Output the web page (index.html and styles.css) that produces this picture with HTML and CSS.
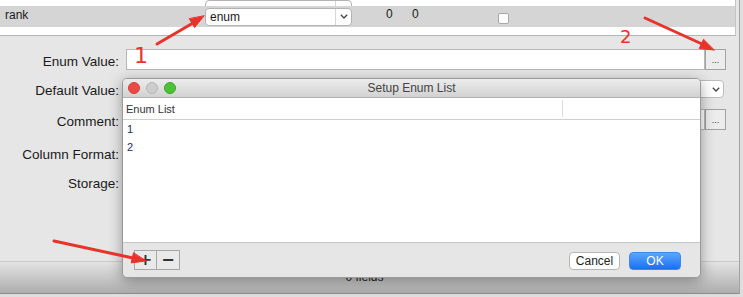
FILE: index.html
```html
<!DOCTYPE html>
<html lang="en">
<head>
    <meta charset="UTF-8">
    <meta name="viewport" content="width=device-width, initial-scale=1.0">
    <title>Setup Enum List</title>
    <link rel="stylesheet" href="styles.css">
</head>
<body>
    <div class="window">
        <div class="fields">
            <div class="frow frow-prev">
                <span></span>
                <span class="sel"><span class="sel-val"></span><span class="sel-arrow"></span></span>
                <span></span>
                <span></span>
                <span class="chk-cell"><span class="chk"></span></span>
            </div>
            <div class="frow frow-active">
                <span class="fname">rank</span>
                <span class="sel">
                    <span class="sel-val">enum</span>
                    <span class="sel-arrow"><svg width="8" height="5" viewBox="0 0 8 5"><path d="M0.8 0.8 L4 4 L7.2 0.8" fill="none" stroke="#444" stroke-width="1.3"/></svg></span>
                </span>
                <span class="num">0</span>
                <span class="num num-b">0</span>
                <span class="chk-cell"><span class="chk"></span></span>
            </div>
        </div>

        <div class="props">
            <div class="prop prop-enum">
                <label>Enum Value:</label>
                <div class="field"></div>
                <button class="more">...</button>
            </div>
            <div class="prop prop-default">
                <label>Default Value:</label>
                <div class="field field-select">
                    <span class="sel-arrow"><svg width="8" height="5" viewBox="0 0 8 5"><path d="M0.8 0.8 L4 4 L7.2 0.8" fill="none" stroke="#444" stroke-width="1.3"/></svg></span>
                </div>
            </div>
            <div class="prop prop-comment">
                <label>Comment:</label>
                <div class="field"></div>
                <button class="more">...</button>
            </div>
            <div class="prop prop-format">
                <label>Column Format:</label>
            </div>
            <div class="prop prop-storage">
                <label>Storage:</label>
            </div>
        </div>

        <div class="statusbar">0 fields</div>
    </div>

    <div class="dialog">
        <div class="titlebar">
            <span class="light light-red"></span>
            <span class="light light-gray"></span>
            <span class="light light-green"></span>
            <span class="title">Setup Enum List</span>
        </div>
        <div class="list">
            <div class="list-head">
                <span class="head-cell">Enum List</span>
                <span class="head-cell head-rest"></span>
            </div>
            <div class="list-row">1</div>
            <div class="list-row">2</div>
        </div>
        <div class="dialog-bar">
            <div class="addremove">
                <button class="ar-btn">+</button>
                <button class="ar-btn">&minus;</button>
            </div>
            <div class="actions">
                <button class="btn btn-cancel">Cancel</button>
                <button class="btn btn-ok">OK</button>
            </div>
        </div>
    </div>

    <svg class="marks" width="743" height="297" viewBox="0 0 743 297">
        <g stroke="#e8322b" stroke-width="3" stroke-linecap="round" fill="#e8322b">
            <line x1="157" y1="44" x2="193" y2="23"/>
            <polygon points="204,16 194.6,27.5 189.4,18.9" stroke-width="1"/>
            <line x1="645" y1="18" x2="702" y2="44"/>
            <polygon points="714,50 699.2,48.6 703.4,39.6" stroke-width="1"/>
            <line x1="54" y1="241" x2="133" y2="258"/>
            <polygon points="146,261 131.2,262.9 133.4,253.1" stroke-width="1"/>
        </g>
        <text class="mark-num" x="134" y="63" font-size="22">1</text>
        <text class="mark-num" x="620" y="43" font-size="18">2</text>
    </svg>
</body>
</html>
```

FILE: styles.css
```css
body {
    margin: 0;
    background-color: #dedede;
    font-family: "Liberation Sans", Arial, sans-serif;
    color: #1a1a1a;
    width: 743px;
    height: 297px;
    overflow: hidden;
    position: relative;
}
.window {
    width: 739px;
    height: 293px;
    border-right: 1px solid #a3a3a3;
    border-bottom: 1px solid #8c8c8c;
    background-color: #e6e6e6;
    display: flex;
    flex-direction: column;
}

/* field table */
.fields {
    height: 35px;
    margin-right: 3px;
    background: #fff;
    border-bottom: 1px solid #b4b4b4;
    border-right: 1px solid #c4c4c4;
}
.frow {
    display: grid;
    grid-template-columns: 205px 147px 48px 50px 98px 1fr;
    font-size: 12px;
}
.frow-prev {
    height: 3px;
    padding-bottom: 3px;
    overflow: hidden;
    align-items: end;
}
.frow-active {
    height: 21px;
    background: #d5d5d5;
    align-items: center;
}
.fname {
    padding-left: 5px;
    padding-bottom: 4px;
}
.sel {
    height: 18px;
    box-sizing: border-box;
    display: flex;
    background: #fff;
    border: 1px solid #b3b3b3;
    border-radius: 4px;
}
.sel-val {
    flex: 1;
    padding-left: 4px;
    line-height: 16px;
    font-size: 12px;
}
.sel-arrow {
    width: 15px;
    border-left: 1px solid #d6d6d6;
    display: flex;
    align-items: center;
    justify-content: center;
}
.num {
    padding-left: 34px;
    padding-bottom: 6px;
}
.num-b {
    padding-left: 12px;
}
.chk-cell {
    padding-left: 48px;
    display: flex;
}
.chk {
    width: 11px;
    height: 11px;
    box-sizing: border-box;
    background: #fff;
    border: 1px solid #a8a8a8;
    border-radius: 2px;
}
.frow-active .chk {
    margin-top: 4px;
}

/* properties */
.props {
    height: 226px;
    padding-top: 13px;
    box-sizing: border-box;
    border-bottom: 1px solid #c9c9c9;
}
.prop {
    display: flex;
    align-items: center;
    padding-right: 13px;
}
.prop label {
    width: 119px;
    margin-right: 7px;
    text-align: right;
    font-size: 13.5px;
    padding-top: 3px;
    white-space: nowrap;
}
.prop-enum { height: 21px; }
.prop-default { height: 18px; margin-top: 10px; padding-right: 15px; }
.prop-comment { height: 21px; margin-top: 11px; }
.prop-format { height: 21px; margin-top: 12px; }
.prop-storage { height: 21px; margin-top: 8px; }
.field {
    flex: 1;
    height: 100%;
    box-sizing: border-box;
    background: #fff;
    border: 1px solid #b7b7b7;
}
.field-select {
    display: flex;
    justify-content: flex-end;
    border-radius: 4px;
    border-color: #bdbdbd;
}
.field-select .sel-arrow {
    border-left: none;
}
.more {
    width: 21px;
    height: 21px;
    padding: 0;
    margin: 0;
    border: 1px solid #a2a2a2;
    background: #ececec;
    font-size: 9px;
    line-height: 14px;
    color: #333;
    font-family: "Liberation Sans", Arial, sans-serif;
}

.statusbar {
    flex: 1;
    background: linear-gradient(#e3e3e3, #adadad);
    text-align: center;
    font-size: 12px;
    line-height: 30px;
    padding-right: 10px;
    color: #222;
}

/* dialog */
.dialog {
    position: absolute;
    left: 122px;
    top: 78px;
    width: 579px;
    height: 200px;
    box-sizing: border-box;
    border: 1px solid #9a9a9a;
    border-radius: 5px;
    background: #e6e6e6;
    box-shadow: 0 3px 14px rgba(0, 0, 0, 0.35);
    display: flex;
    flex-direction: column;
    overflow: hidden;
}
.titlebar {
    height: 18px;
    flex: none;
    display: flex;
    align-items: center;
    padding-left: 5px;
    gap: 6px;
    background: linear-gradient(#ececec, #d2d2d2);
    border-bottom: 1px solid #b1b1b1;
    position: relative;
}
.light {
    width: 12px;
    height: 12px;
    box-sizing: border-box;
    border-radius: 50%;
}
.light-red { background: #ec4a44; border: 1px solid #d2413b; }
.light-gray { background: #cdcdcd; border: 1px solid #b7b7b7; }
.light-green { background: #4cc137; border: 1px solid #3aa52a; }
.title {
    position: absolute;
    left: 0;
    right: 0;
    text-align: center;
    font-size: 12px;
    color: #444;
}
.list {
    flex: 1;
    background: #fff;
    border-bottom: 1px solid #c6c6c6;
}
.list-head {
    height: 21px;
    display: flex;
    align-items: center;
    border-bottom: 1px solid #cfcfcf;
    font-size: 11px;
    color: #333;
}
.head-cell {
    width: 436px;
    padding-left: 3px;
}
.head-rest {
    width: auto;
    height: 17px;
    border-left: 1px solid #dcdcdc;
}
.list-row {
    height: 18px;
    line-height: 18px;
    padding-left: 4px;
    font-size: 11px;
    color: #1f2d5a;
}
.dialog-bar {
    height: 34px;
    flex: none;
    display: flex;
    justify-content: space-between;
}
.addremove {
    display: flex;
    margin: 7px 0 0 11px;
}
.ar-btn {
    width: 23px;
    height: 20px;
    margin: 0;
    padding: 0;
    border: 1px solid #a7a7a7;
    background: #e9e9e9;
    font-size: 16px;
    font-weight: bold;
    line-height: 16px;
    color: #333;
    font-family: "DejaVu Sans", sans-serif;
}
.ar-btn + .ar-btn {
    border-left: none;
}
.actions {
    display: flex;
    gap: 9px;
    margin: 9px 19px 0 0;
}
.btn {
    width: 52px;
    height: 18px;
    padding: 0;
    border-radius: 4px;
    font-size: 12px;
    font-family: "Liberation Sans", Arial, sans-serif;
}
.btn-cancel {
    width: 51px;
    background: #fff;
    border: 1px solid #b5b5b5;
    color: #222;
}
.btn-ok {
    background: linear-gradient(#5ca6fb, #1b6ff5);
    border: 1px solid #3f86f0;
    color: #fff;
}

/* annotation overlay */
.marks {
    position: absolute;
    left: 0;
    top: 0;
    pointer-events: none;
}
.mark-num {
    fill: #e8322b;
    font-family: "DejaVu Sans", sans-serif;
}
```
